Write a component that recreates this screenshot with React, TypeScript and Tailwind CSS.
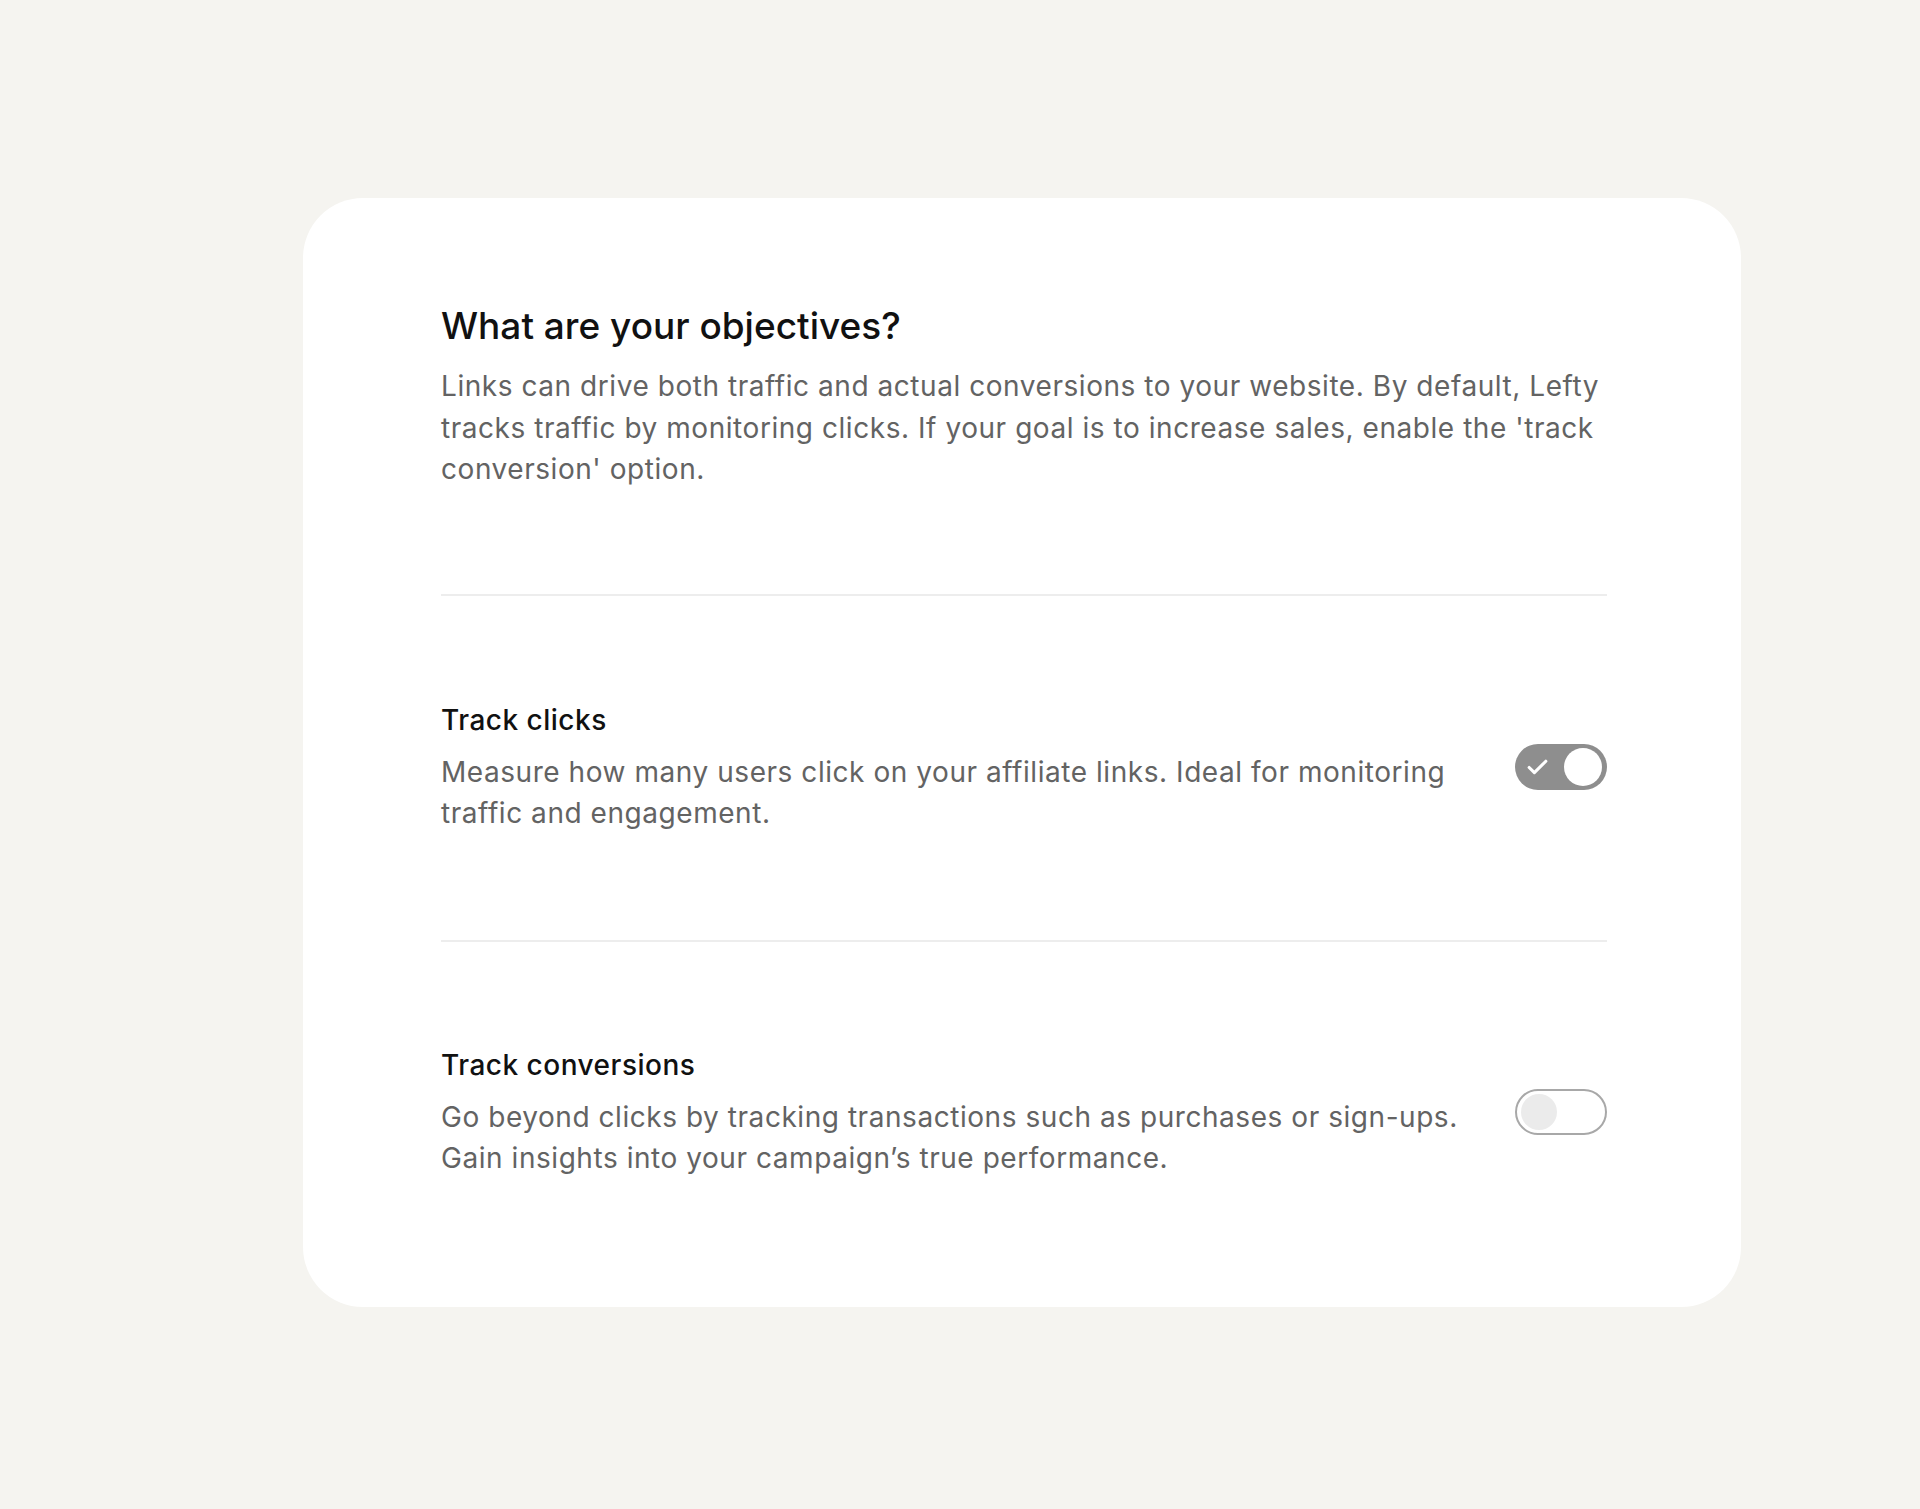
import { Check } from 'lucide-react';

type Option = {
  title: string;
  description: string;
  enabled: boolean;
};

const options: Option[] = [
  {
    title: 'Track clicks',
    description:
      'Measure how many users click on your affiliate links. Ideal for monitoring traffic and engagement.',
    enabled: true,
  },
  {
    title: 'Track conversions',
    description:
      'Go beyond clicks by tracking transactions such as purchases or sign-ups. Gain insights into your campaign\u2019s true performance.',
    enabled: false,
  },
];

function Toggle({ on }: { on: boolean }) {
  if (on) {
    return (
      <div className="flex h-[46px] w-[92px] shrink-0 items-center justify-between rounded-full bg-[#8e8e8e] pl-[10px] pr-[5px]">
        <Check size={25} strokeWidth={3} className="text-white" />
        <div className="h-[38px] w-[38px] rounded-full bg-white" />
      </div>
    );
  }
  return (
    <div className="flex h-[46px] w-[92px] shrink-0 items-center rounded-full border-2 border-[#a8a8a8] bg-white pl-[4px]">
      <div className="h-[36px] w-[36px] rounded-full bg-[#ebebeb]" />
    </div>
  );
}

export default function App() {
  return (
    <div className="min-h-[1509px] w-full bg-[#f5f4f0] pt-[198px] font-['Inter','Noto_Sans',sans-serif]">
      <div className="ml-[303px] w-[1438px] rounded-[60px] bg-white pb-[127px] pl-[138px] pr-[134px] pt-[106px]">
        {/* Intro */}
        <div className="pb-[103px]">
          <h1 className="text-[37px] font-medium leading-[44px] text-[#111111]">
            What are your objectives?
          </h1>
          <p className="mt-[18px] text-[28px] leading-[41.5px] tracking-[0.55px] text-[#636363]">
            Links can drive both traffic and actual conversions to your website. By default, Lefty
            tracks traffic by monitoring clicks. If your goal is to increase sales, enable the
            'track conversion' option.
          </p>
        </div>

        {options.map((opt) => (
          <div key={opt.title} className="border-t-2 border-[#ededed]">
            <div
              className={
                opt.enabled
                  ? 'flex items-center gap-[48px] pb-[105px] pt-[104px]'
                  : 'flex items-center gap-[48px] pt-[103px]'
              }
            >
              <div className="min-w-0 flex-1">
                <h2 className="text-[28px] font-medium leading-[41px] tracking-[0.5px] text-[#111111]">
                  {opt.title}
                </h2>
                <p className="mt-[11px] text-[28px] leading-[41.5px] tracking-[0.55px] text-[#636363]">
                  {opt.description}
                </p>
              </div>
              <Toggle on={opt.enabled} />
            </div>
          </div>
        ))}
      </div>
    </div>
  );
}
